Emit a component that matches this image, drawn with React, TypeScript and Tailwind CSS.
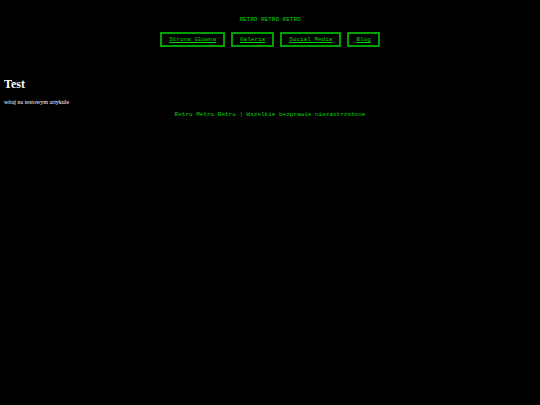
import React from "react";

const links = ["Strona Główna", "Galeria", "Social Media", "Blog"];

export default function App() {
  return (
    <div className="w-full min-h-[405px] bg-black">
      <header className="pt-[16px] text-center font-['Liberation_Mono',monospace] text-[#00d800]">
        <div className="text-[6px] leading-[8px]">RETRO RETRO RETRO</div>
        <nav className="mt-[8px] flex justify-center gap-[6px]">
          {links.map((l) => (
            <a
              key={l}
              href="#"
              className="border-2 border-[#00a000] px-[7px] h-[15px] flex items-center text-[6px] underline"
            >
              {l}
            </a>
          ))}
        </nav>
      </header>
      <main className="mt-[30px] px-[4px] font-['Liberation_Serif',serif] text-white">
        <h1 className="text-[12px] leading-[14px] font-bold">Test</h1>
        <p className="mt-[7px] text-[6px] leading-[8px]">witaj na testowym artykule</p>
      </main>
      <footer className="mt-[5px] text-center font-['Liberation_Mono',monospace] text-[6px] leading-[8px] text-[#00d800]">
        Retro Metro Retro | Wszelkie bezprawie niezastrzeżone
      </footer>
    </div>
  );
}
